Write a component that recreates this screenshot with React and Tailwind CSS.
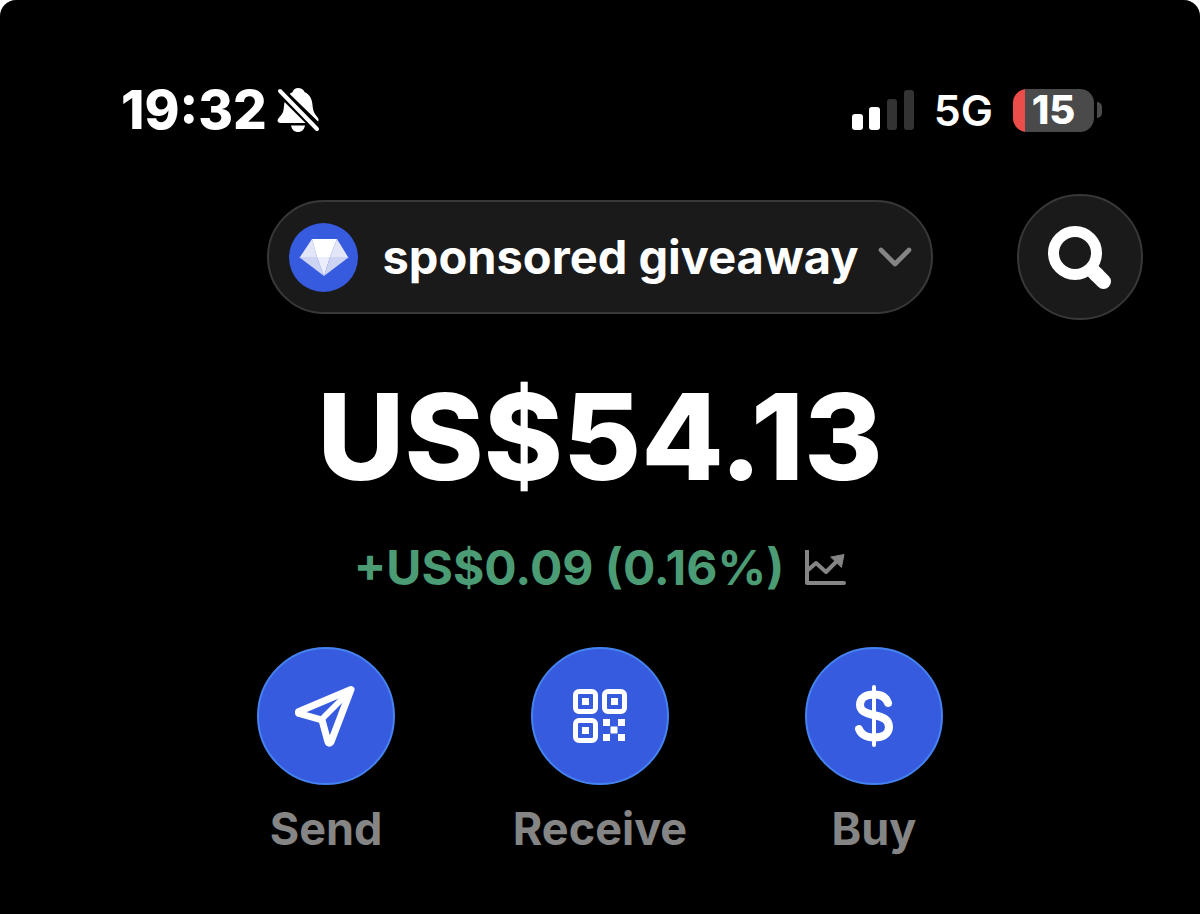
import { ChevronDown } from "lucide-react";

const BellOffIcon = () => (
  <svg viewBox="0 0 43 46" className="w-[43px] h-[46px]" aria-hidden="true">
    <path
      fill="#fff"
      d="M21 1 C24 1 26.500 2.500 27.500 5 C33 7.500 35 12 35.500 18 C36 25 38 27 41 31 C42 33 41.500 34 41 34.500 L12.500 7 C14 6 15 5.500 15.500 5 C16.500 2.500 18.500 1 21 1 Z"
    />
    <path
      fill="#fff"
      d="M7.500 15 L28.500 36 L4 36 C1.500 36 0 34.500 0.800 32.500 C2 30 6 27.500 6.500 23 Z"
    />
    <path fill="#fff" d="M14 38.500 L28 38.500 C27 43 24.500 45 21 45 C17.500 45 15 43 14 38.500 Z" />
    <path stroke="#000" strokeWidth="8" d="M4 4 L41 41" />
    <path stroke="#fff" strokeWidth="4" strokeLinecap="round" d="M3 4 L40 42" />
  </svg>
);

const SignalIcon = () => (
  <svg viewBox="0 0 62 40" className="w-[62px] h-10" role="img" aria-label="Signal 2 of 4">
    <rect x="0" y="24" width="11" height="16" rx="3" fill="#fff" />
    <rect x="17" y="17" width="11" height="23" rx="3" fill="#fff" />
    <rect x="35" y="9" width="10" height="31" rx="3" fill="#333" />
    <rect x="52" y="0" width="10" height="40" rx="3" fill="#333" />
  </svg>
);

const DiamondIcon = () => (
  <svg viewBox="0 0 50 37" className="w-[50px] h-[37px]" aria-hidden="true">
    <path fill="#e3e6f8" d="M13 0 L1 18 L18 18 Z" />
    <path fill="#fff" d="M13 0 L38 0 L31 18 L18 18 Z" />
    <path fill="#e3e6f8" d="M38 0 L49 18 L31 18 Z" />
    <path fill="#ccd3f3" d="M0 18 L18 18 L25 37 Z" />
    <path fill="#eceefb" d="M18 18 L31 18 L25 37 Z" />
    <path fill="#ccd3f3" d="M31 18 L50 18 L25 37 Z" />
  </svg>
);

const SearchIcon = () => (
  <svg viewBox="0 0 64 64" className="w-16 h-16" fill="none" stroke="#fff" aria-hidden="true">
    <circle cx="27" cy="28" r="21.500" strokeWidth="11" />
    <path d="M44 45 L50 51" strokeWidth="15" />
    <path d="M48 49 L55.500 56.500" strokeWidth="15" strokeLinecap="round" />
  </svg>
);

const ChartIcon = () => (
  <svg
    viewBox="0 0 42 36"
    className="w-[42px] h-9"
    fill="none"
    stroke="#858585"
    strokeWidth="4"
    strokeLinecap="round"
    strokeLinejoin="round"
    aria-hidden="true"
  >
    <path d="M3 1 L3 33 L40 33" />
    <path d="M4 20 L12 13 L22 22 L33 11" />
    <path fill="#858585" strokeWidth="1" d="M27 7 L40 4.500 L37.500 17 Z" />
  </svg>
);

const SendIcon = () => (
  <svg
    viewBox="0 0 62 62"
    className="w-[62px] h-[62px]"
    fill="none"
    stroke="#fff"
    strokeWidth="7"
    strokeLinecap="round"
    strokeLinejoin="round"
    aria-hidden="true"
  >
    <path d="M56 4.500 L4 26.500 C3 27 3 28 4 28.500 L27 35 L33 57 C33.500 58.500 35 58.500 36 57 Z" />
    <path strokeWidth="6" d="M55 6 L27 34" />
  </svg>
);

const QrIcon = () => (
  <svg viewBox="0 0 54 54" className="w-[54px] h-[54px]" fill="#fff" aria-hidden="true">
    <g fill="none" stroke="#fff" strokeWidth="5">
      <rect x="2.500" y="2.500" width="20" height="20" rx="3.500" />
      <rect x="31.500" y="2.500" width="20" height="20" rx="3.500" />
      <rect x="2.500" y="31.500" width="20" height="20" rx="3.500" />
    </g>
    <path d="M9 9h7v7h-7z M38 9h7v7h-7z M9 38h7v7h-7z" />
    <path d="M30 30h7v7h-7z M45 30h7v7h-7z M37.500 37.500h7v7h-7z M30 45h7v7h-7z M45 45h7v7h-7z" />
  </svg>
);

const DollarIcon = () => (
  <svg
    viewBox="0 0 40 64"
    className="w-10 h-16"
    fill="none"
    stroke="#fff"
    strokeLinecap="round"
    aria-hidden="true"
  >
    <path strokeWidth="4" d="M20 3 L20 61" />
    <path
      strokeWidth="8"
      d="M34 19 C32 13 27 10.500 20 10.500 C12 10.500 6 14 6 20.500 C6 27 11 29 19.500 31 C29 33 35 35.500 35 43 C35 50 28.500 53.500 20.500 53.500 C12.500 53.500 7 50.500 5 45"
    />
  </svg>
);

const actions = [
  { label: "Send", icon: SendIcon },
  { label: "Receive", icon: QrIcon },
  { label: "Buy", icon: DollarIcon },
];

export default function App() {
  return (
    <div className="min-h-screen bg-white">
      <div className="min-h-screen bg-black rounded-t-2xl pt-[88px] pb-14 font-['Inter',sans-serif] text-white">
        {/* Status bar */}
        <div className="flex h-11 items-center justify-between pl-[121px] pr-[98px]">
          <div className="flex items-center gap-2.5">
            <span className="text-[53px] leading-11 font-extrabold">19:32</span>
            <BellOffIcon />
          </div>
          <div className="flex items-center gap-5">
            <SignalIcon />
            <span className="text-[43px] leading-11 font-semibold">5G</span>
            <div className="flex items-center gap-[3px]">
              <div className="flex h-[43px] w-[81px] items-center justify-center rounded-[14px] bg-linear-to-r from-[#eb4d4b] from-15% to-[#4a4a4a] to-15% text-[40px] leading-10 font-extrabold">
                15
              </div>
              <div className="h-4 w-[5px] rounded-r-full bg-[#4a4a4a]" />
            </div>
          </div>
        </div>

        {/* Account switcher and search */}
        <header className="mt-[62px] grid grid-cols-[1fr_auto_1fr] items-center px-[57px]">
          <button
            type="button"
            className="col-start-2 flex h-[114px] items-center rounded-full border-2 border-[#383838] bg-[#1a1a1a] pl-5 pr-2"
          >
            <span className="flex size-[69px] items-center justify-center rounded-full bg-[#375bde]">
              <DiamondIcon />
            </span>
            <span className="ml-6 text-[47px] leading-14 font-bold">
              sponsored giveaway
            </span>
            <ChevronDown className="ml-2 size-14 text-[#858585]" strokeWidth={2} />
          </button>
          <button
            type="button"
            aria-label="Search"
            className="flex size-[126px] items-center justify-center justify-self-end rounded-full border-2 border-[#383838] bg-[#1a1a1a]"
          >
            <SearchIcon />
          </button>
        </header>

        {/* Balance */}
        <main className="flex flex-col items-center">
          <h1 className="mt-[57px] text-[120px] leading-[120px] font-extrabold">US$54.13</h1>
          <div className="mt-[41px] flex items-center gap-5">
            <p className="text-[48px] leading-[60px] font-bold text-[#4b9c75]">
              +US$0.09 (0.16%)
            </p>
            <ChartIcon />
          </div>

          {/* Actions */}
          <div className="mt-[49px] grid grid-cols-[274px_274px_274px]">
            {actions.map(({ label, icon: Icon }) => (
              <button
                key={label}
                type="button"
                className="flex flex-col items-center gap-5 text-[45px] leading-12 font-bold text-[#858585]"
              >
                <span className="flex size-[138px] items-center justify-center rounded-full border-2 border-[#4583f0] bg-[#375bde]">
                  <Icon />
                </span>
                {label}
              </button>
            ))}
          </div>
        </main>
      </div>
    </div>
  );
}
